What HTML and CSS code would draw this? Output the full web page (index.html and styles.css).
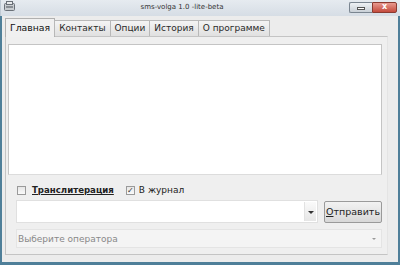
FILE: index.html
```html
<!DOCTYPE html>
<html>
<head>
<meta charset="utf-8">
<link rel="stylesheet" href="styles.css">
</head>
<body>
<div class="window">
  <div class="titlebar">
    <svg class="appicon" width="11" height="10" viewBox="0 0 11 10">
      <rect x="0.5" y="2.5" width="10" height="7" rx="1" fill="#c8ccd0" stroke="#6a7078"/>
      <rect x="2.5" y="0.5" width="6" height="3" fill="#e8eaec" stroke="#6a7078"/>
      <line x1="2" y1="6" x2="9" y2="6" stroke="#4a5058"/>
    </svg>
    <div class="title">sms-volga 1.0 -lite-beta</div>
    <div class="wbtns">
      <div class="wbtn min"><span></span></div>
      <div class="wbtn close">x</div>
    </div>
  </div>
  <div class="client">
    <div class="tabs">
      <div class="tab active">Главная</div>
      <div class="tab">Контакты</div>
      <div class="tab">Опции</div>
      <div class="tab">История</div>
      <div class="tab">О программе</div>
    </div>
    <div class="panel">
      <div class="textarea"></div>
      <div class="checks">
        <label class="chk"><span class="box"></span><span class="bold u">Транслитерация</span></label>
        <label class="chk"><span class="box checked">✓</span><span class="lbl">В журнал</span></label>
      </div>
      <div class="sendrow">
        <div class="combo edit"><span class="arrow"></span></div>
        <div class="button"><span class="u">О</span>тправить</div>
      </div>
      <div class="combo oper"><span class="ph">Выберите оператора</span><span class="arrow light"></span></div>
    </div>
  </div>
</div>
</body>
</html>
```
FILE: styles.css
```css
* { box-sizing: border-box; }
html, body { margin: 0; padding: 0; background: #ececec; }
body { font-family: "DejaVu Sans", "Liberation Sans", sans-serif; font-size: 9px; color: #222; }
.window {
  width: 400px; height: 265px;
  display: flex; flex-direction: column;
  background: #ececec;
  border-left: 2px solid #4f7f99;
  border-right: 2px solid #4f7f99;
  border-bottom: 3px solid #4f7f99;
}
.titlebar {
  height: 16px; flex: none;
  display: flex; align-items: center;
  background: linear-gradient(#e6ebf0, #d6dde5);
  padding: 0 3px 0 1px;
  margin: 0 -2px;
  border-left: 1px solid #c0cad4;
}
.appicon { flex: none; margin-top: -4px; margin-left: 2px; }
.title {
  flex: 1; text-align: center; font-size: 7px; color: #333;
  font-family: "DejaVu Sans", sans-serif; margin-top: -2px;
}
.wbtns { display: flex; align-items: center; margin-top: -2px; }
.wbtn { height: 11px; border: 1px solid #7a8590; }
.wbtn.min { width: 23px; background: linear-gradient(#eef1f4, #c9d0d7); display: flex; align-items: center; justify-content: center; border-right: none; border-radius: 2px 0 0 2px; }
.wbtn.min span { width: 8px; height: 3px; border: 1px solid #555; background: #fff; margin-top: 2px; }
.wbtn.close { width: 25px; background: linear-gradient(#e89a90, #c44a3c); color: #fff; font-size: 8px; font-weight: bold; line-height: 8px; text-align: center; border-color: #8a3a30; border-radius: 0 2px 2px 0; }
.client { flex: 1; display: flex; flex-direction: column; padding: 2px 10px 7px 3px; }
.tabs { display: flex; align-items: flex-end; height: 18px; position: relative; z-index: 1; }
.tab {
  height: 16px; padding: 0 4px; line-height: 15px;
  border: 1px solid #b8b8b8; border-bottom: none;
  background: linear-gradient(#f4f4f4, #e0e0e0);
  font-size: 9px; color: #2a2a2a; margin-left: -1px;
}
.tab:first-child { margin-left: 0; }
.tab.active { height: 19px; background: #f0f0f0; margin-bottom: -1px; border-color: #b0b0b0; padding: 1px 4px 0; color: #111; font-size: 9.3px; }
.panel {
  flex: 1; display: flex; flex-direction: column;
  border: 1px solid #c4c4c4; border-right-color: #e4e4e4; background: #efefef;
  padding: 7px 5px 6px 2px;
}
.textarea { height: 131px; flex: none; background: #fff; border: 1px solid #c4c4c4; border-bottom-color: #dcdcdc; }
.checks { display: flex; align-items: center; gap: 12px; padding: 7px 0 0 9px; height: 23px; }
.chk { display: flex; align-items: center; gap: 6px; font-size: 9px; }
.chk + .chk { gap: 4px; }
.box { width: 9px; height: 9px; border: 1px solid #9a9a9a; background: linear-gradient(#e6e6e6, #fafafa); font-size: 8px; line-height: 7px; text-align: center; color: #333; }
.bold { font-weight: bold; color: #222; font-size: 8.6px; }
.u { text-decoration: underline; }
.sendrow { display: flex; align-items: center; gap: 6px; margin: 2px 0 0 8px; }
.combo { position: relative; background: #fff; border: 1px solid #e0e0e0; }
.combo.edit { flex: 1; height: 23px; }
.arrow { position: absolute; right: 1px; top: 1px; bottom: 1px; width: 12px; background: linear-gradient(#fafafa, #e6e6e6); border-left: 1px solid #e2e2e2; }
.arrow::after { content: ""; position: absolute; left: 3px; top: 9px; border-left: 3px solid transparent; border-right: 3px solid transparent; border-top: 3px solid #333; }
.arrow.light { background: none; border: none; }
.arrow.light::after { top: 7px; border-top-color: #999; border-width: 2px 2px 0 2px; left: 4px; }
.button {
  width: 58px; height: 22px; border: 1px solid #9a9a9a; border-radius: 2px;
  background: linear-gradient(#f2f2f2, #d8d8d8);
  display: flex; align-items: center; justify-content: center;
  font-size: 9.5px; color: #222;
}
.combo.oper { height: 19px; margin: 6px 0 0 8px; background: #f4f4f4; border-color: #e4e4e4; display: flex; align-items: center; padding-left: 1px; }
.ph { color: #888; font-size: 9px; }
```
